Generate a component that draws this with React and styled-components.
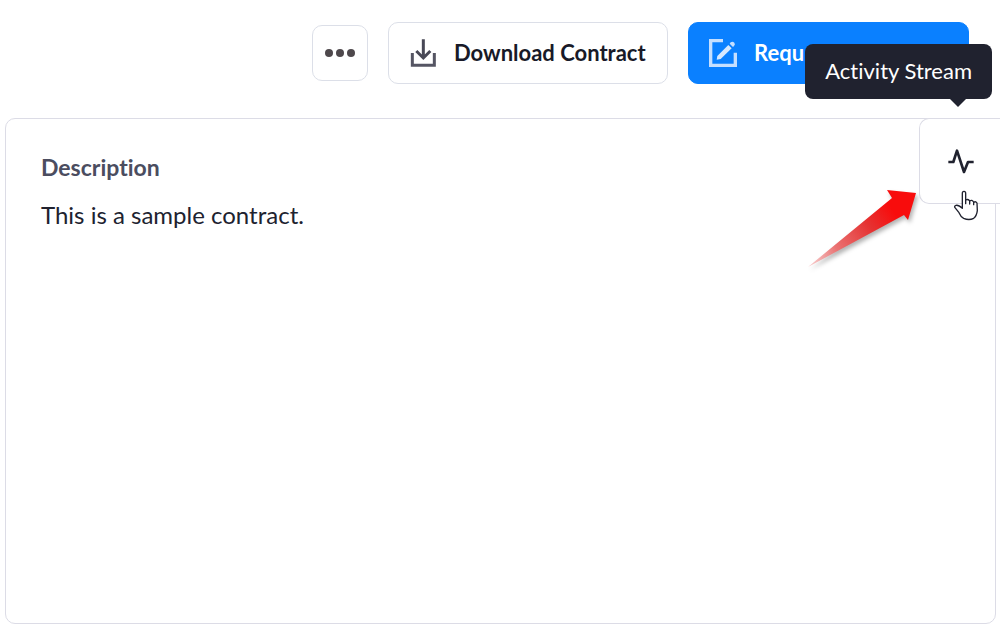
import styled, { createGlobalStyle } from "styled-components";

export default function App() {
  return (
    <>
      <GlobalStyle />
      <Page>
        <Toolbar>
          <MoreButton type="button" aria-label="More actions">
            <Dot />
            <Dot />
            <Dot />
          </MoreButton>
          <ActionButton type="button">
            <DownloadIcon />
            Download Contract
          </ActionButton>
          <ActionButton type="button" $primary>
            <EditIcon />
            Requ
          </ActionButton>
        </Toolbar>
        <Card>
          <Title>Description</Title>
          <Text>This is a sample contract.</Text>
          <ActivityTab>
            <ActivityButton type="button" aria-label="Activity Stream">
              <PulseIcon />
            </ActivityButton>
            <Tooltip role="tooltip">Activity Stream</Tooltip>
            <RedArrow />
            <HandCursor />
          </ActivityTab>
        </Card>
      </Page>
    </>
  );
}

function DownloadIcon() {
  return (
    <svg width="28" height="28" viewBox="0 0 84 84" fill="none" aria-hidden="true">
      <path d="M10 42V79H76V42" stroke="#555563" strokeWidth="9" />
      <path d="M43 1V56M22 36L43 57L64 36" stroke="#484856" strokeWidth="9" />
    </svg>
  );
}

function EditIcon() {
  return (
    <svg width="28" height="28" viewBox="0 0 84 84" fill="none" aria-hidden="true">
      <path d="M42 5H5V79H79V41" stroke="#c5dfff" strokeWidth="10" />
      <path d="M23 62L25 51L58 18L68 28L35 60Z" fill="#d6e8ff" />
      <path d="M62 14L65 10Q71 6 76 11Q80 17 75 21L72 24Z" fill="#c5dfff" />
    </svg>
  );
}

function PulseIcon() {
  return (
    <svg width="28" height="28" viewBox="0 0 84 84" fill="none" aria-hidden="true">
      <path
        d="M4 45H19L30 11L51 75L63 45H80"
        stroke="#20222f"
        strokeWidth="8"
        strokeLinejoin="round"
      />
    </svg>
  );
}

function RedArrow() {
  return (
    <Pointer width="120" height="90" viewBox="0 0 120 90" aria-hidden="true">
      <defs>
        <linearGradient id="arrowFill" gradientUnits="userSpaceOnUse" x1="8" y1="82" x2="100" y2="16">
          <stop offset="0" stopColor="#f6bcbc" stopOpacity="0.7" />
          <stop offset="0.3" stopColor="#ea7272" />
          <stop offset="0.65" stopColor="#e53232" />
          <stop offset="0.9" stopColor="#f80c0c" />
        </linearGradient>
      </defs>
      <path d="M8 82L92 13L87 5L116 8L108 35L104 30Z" fill="url(#arrowFill)" />
    </Pointer>
  );
}

function HandCursor() {
  return (
    <Cursor width="27" height="33" viewBox="0 0 81 99" aria-hidden="true">
      <path
        d="M34 61V16Q34 10 39 10Q44 10 44 16V47V36Q50 32 56 38V48V39Q63 34 68 42V50V43Q74 39 78 45L79 68Q77 84 68 91Q54 98 38 91Q29 86 24 74L12 59Q9 54 15 52Q22 50 34 61Z"
        fill="#ffffff"
        stroke="#20222f"
        strokeWidth="4"
        strokeLinejoin="round"
      />
    </Cursor>
  );
}

const GlobalStyle = createGlobalStyle`
  * {
    box-sizing: border-box;
  }

  body {
    margin: 0;
    background-color: #ffffff;
    font-family: "Lato", sans-serif;
    font-variant-ligatures: none;
    overflow-x: hidden;
  }
`;

const Page = styled.main`
  min-height: 100vh;
  display: flex;
  flex-direction: column;
  padding: 22px 4px 4px 5px;
`;

const Toolbar = styled.div`
  display: flex;
  justify-content: flex-end;
  align-items: center;
  gap: 20px;
  padding-right: 27px;
  margin-bottom: 34px;
`;

const MoreButton = styled.button`
  width: 56px;
  height: 56px;
  display: flex;
  align-items: center;
  justify-content: center;
  gap: 3px;
  padding: 0;
  background-color: #ffffff;
  border: 1px solid #dcdfe8;
  border-radius: 10px;
`;

const Dot = styled.span`
  width: 8px;
  height: 8px;
  border-radius: 50%;
  background-color: #4e484c;
`;

const ActionButton = styled.button`
  min-width: ${({ $primary }) => ($primary ? "281px" : "280px")};
  height: 62px;
  display: flex;
  align-items: center;
  gap: 17px;
  padding: 0 20px;
  font-family: inherit;
  font-weight: 700;
  font-size: 22px;
  line-height: 28px;
  white-space: nowrap;
  color: ${({ $primary }) => ($primary ? "#ffffff" : "#181a28")};
  background-color: ${({ $primary }) => ($primary ? "#0a80ff" : "#ffffff")};
  border: 1px solid ${({ $primary }) => ($primary ? "#0a80ff" : "#dcdfe8")};
  border-radius: 10px;
`;

const Card = styled.section`
  position: relative;
  flex: 1;
  padding: 32px 35px;
  border: 1px solid #dcdce6;
  border-radius: 10px;
`;

const Title = styled.h2`
  margin: 0 0 16px;
  font-weight: 700;
  font-size: 23px;
  line-height: 32px;
  color: #4b4d5f;
`;

const Text = styled.p`
  margin: 0;
  font-weight: 400;
  font-size: 24px;
  line-height: 32px;
  color: #20222f;
`;

/* hangs over the card's right edge */
const ActivityTab = styled.div`
  position: absolute;
  top: -1px;
  right: -5px;
`;

const ActivityButton = styled.button`
  width: 81px;
  height: 86px;
  display: flex;
  align-items: center;
  justify-content: center;
  padding: 0 0 0 2px;
  background-color: #ffffff;
  border: 1px solid #dcdce6;
  border-right: none;
  border-radius: 10px 0 0 10px;
`;

const Tooltip = styled.div`
  position: absolute;
  right: 8px;
  bottom: 105px;
  padding: 13px 20px 14px;
  font-size: 22px;
  line-height: 28px;
  white-space: nowrap;
  color: #ffffff;
  background-color: #20222f;
  border-radius: 8px;

  &::after {
    content: "";
    position: absolute;
    top: 100%;
    right: 26px;
    border: 8px solid transparent;
    border-top-color: #20222f;
    border-bottom: none;
  }
`;

const Pointer = styled.svg`
  position: absolute;
  top: 67px;
  right: 80px;
  filter: drop-shadow(2px 3px 2px rgba(0, 0, 0, 0.3));
`;

const Cursor = styled.svg`
  position: absolute;
  top: 70px;
  right: 22px;
`;
